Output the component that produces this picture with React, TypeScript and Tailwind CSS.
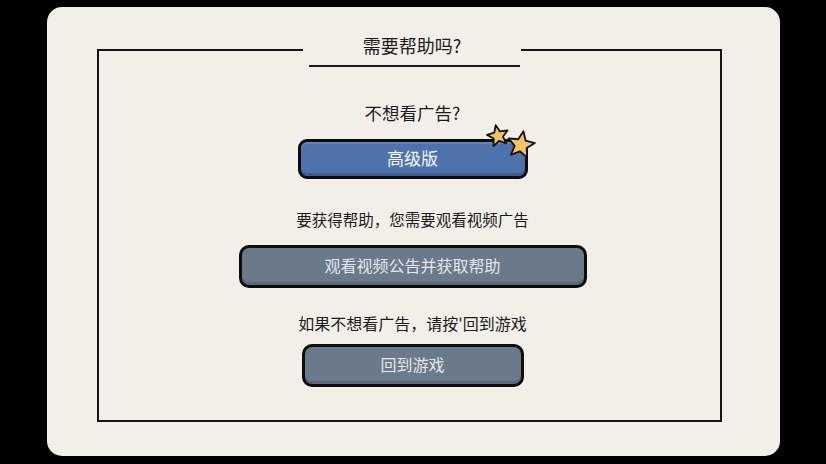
import React from "react";

const FONT = { fontFamily: '"Noto Sans CJK SC", "Noto Sans", sans-serif' };

function starPoints(cx: number, cy: number, outer: number, inner: number, rot: number) {
  const pts: string[] = [];
  for (let i = 0; i < 10; i++) {
    const r = i % 2 === 0 ? outer : inner;
    const a = ((rot - 90 + i * 36) * Math.PI) / 180;
    pts.push(`${(cx + r * Math.cos(a)).toFixed(2)},${(cy + r * Math.sin(a)).toFixed(2)}`);
  }
  return pts.join(" ");
}

function Stars() {
  return (
    <svg
      className="absolute left-[186px] top-[-16px] pointer-events-none"
      width="60"
      height="40"
      viewBox="0 0 60 40"
    >
      <polygon
        points={starPoints(14, 13, 11, 5, -12)}
        fill="#f3c266"
        stroke="#111"
        strokeWidth="1.8"
        strokeLinejoin="round"
      />
      <polygon
        points={starPoints(37, 22, 14, 6.4, 10)}
        fill="#f3c266"
        stroke="#111"
        strokeWidth="1.8"
        strokeLinejoin="round"
      />
    </svg>
  );
}

export default function App() {
  return (
    <div className="w-[826px] h-[464px] bg-black pt-[7px] pl-[47px]" style={FONT}>
      <div className="w-[733px] h-[449px] rounded-[15px] bg-[#f2eee8] pt-[42px] pl-[50px]">
        {/* framed panel, its top edge broken by the heading */}
        <div className="relative w-[625px] h-[373px] border-2 border-[#141414]">
          <div className="absolute left-[204px] top-[-17px] w-[218px] bg-[#f2eee8] flex flex-col">
            <div className="h-[22px] flex items-center justify-center text-[18px] leading-[22px] text-[#1c1c1c]">
              需要帮助吗?
            </div>
            <div className="ml-[6px] mt-[9px] w-[211px] h-[2px] bg-[#1a1a1a]" />
          </div>

          <div className="flex flex-col items-center pl-[6px] text-[#1c1c1c]">
            <div className="mt-[50px] text-[17.5px] leading-[24px]">不想看广告?</div>

            <div className="relative mt-[14px]">
              <button className="w-[230px] h-[40px] pb-[3px] rounded-[9px] border-[3px] border-[#0d0d0d] bg-[#4e73ac] shadow-[inset_0_-3px_0_rgba(0,0,0,0.18),inset_0_2px_0_rgba(255,255,255,0.12)] text-[17px] text-[#f4f6fa] flex items-center justify-center">
                高级版
              </button>
              <Stars />
            </div>

            <div className="mt-[29px] text-[15.5px] leading-[22px]">要获得帮助，您需要观看视频广告</div>

            <button className="mt-[15px] w-[348px] h-[43px] pb-[3px] rounded-[10px] border-[3px] border-[#0d0d0d] bg-[#6b7a8a] shadow-[inset_0_-3px_0_rgba(0,0,0,0.15)] text-[16px] text-[#e3e7eb] flex items-center justify-center">
              观看视频公告并获取帮助
            </button>

            <div className="mt-[24px] text-[16px] leading-[22px]">如果不想看广告，请按'回到游戏</div>

            <button className="mt-[10px] w-[222px] h-[43px] pb-[3px] rounded-[10px] border-[3px] border-[#0d0d0d] bg-[#6b7a8a] shadow-[inset_0_-3px_0_rgba(0,0,0,0.15)] text-[16px] text-[#e3e7eb] flex items-center justify-center">
              回到游戏
            </button>
          </div>
        </div>
      </div>
    </div>
  );
}
